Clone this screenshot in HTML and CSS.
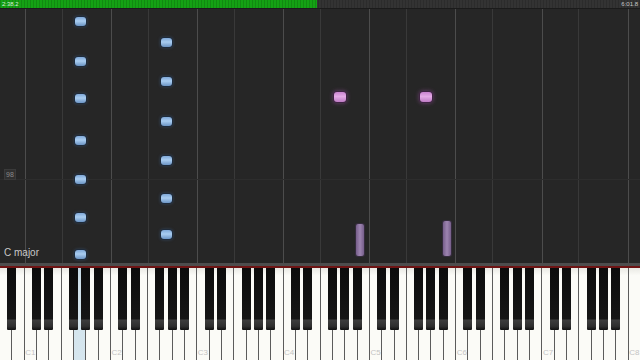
FILE: index.html
```html
<!DOCTYPE html>
<html lang="en">
  <head>
    <meta charset="utf-8">
    <title>Piano roll</title>
    <link rel="stylesheet" href="styles.css">
  </head>
  <body>
    <div class="app">
      <div class="timebar">
        <span class="time">2:38.2</span>
        <span class="time">6:01.8</span>
      </div>

      <div class="roll">
        <div class="lanes">
          <div class="lane"></div>
          <div class="lane c"></div><div class="lane f"></div>
          <div class="lane c"></div><div class="lane f"></div>
          <div class="lane c"></div><div class="lane f"></div>
          <div class="lane c"></div><div class="lane f"></div>
          <div class="lane c"></div><div class="lane f"></div>
          <div class="lane c"></div><div class="lane f"></div>
          <div class="lane c"></div><div class="lane f"></div>
          <div class="lane c"></div>
        </div>
        <div class="measure"></div>
        <span class="bar-no">98</span>
        <span class="key-sig">C major</span>

        <!-- G1 -->
        <div class="note blue" style="left:74.5px; top:7.5px"></div>
        <div class="note blue" style="left:74.5px; top:47.5px"></div>
        <div class="note blue" style="left:74.5px; top:84.5px"></div>
        <div class="note blue" style="left:74.5px; top:126.5px"></div>
        <div class="note blue" style="left:74.5px; top:165.5px"></div>
        <div class="note blue" style="left:74.5px; top:203.5px"></div>
        <div class="note blue" style="left:74.5px; top:240.5px"></div>
        <!-- G2 -->
        <div class="note blue" style="left:160.7px; top:28.5px"></div>
        <div class="note blue" style="left:160.7px; top:67.5px"></div>
        <div class="note blue" style="left:160.7px; top:107.5px"></div>
        <div class="note blue" style="left:160.7px; top:146.5px"></div>
        <div class="note blue" style="left:160.7px; top:184.5px"></div>
        <div class="note blue" style="left:160.7px; top:220.5px"></div>
        <!-- G4 / G5 -->
        <div class="note pink" style="left:333.5px; top:83px"></div>
        <div class="note pink" style="left:420px; top:83px"></div>
        <!-- A#4 / A#5 -->
        <div class="note purple" style="left:356px; top:215px; height:32px"></div>
        <div class="note purple" style="left:443px; top:212px; height:35px"></div>
      </div>

      <div class="keybed"></div>

      <div class="keyboard">
        <div class="key"><span class="blk"></span></div>
        <div class="key"></div>

        <div class="key"><span class="blk"></span><span class="lbl">C1</span></div>
        <div class="key"><span class="blk"></span></div>
        <div class="key"></div>
        <div class="key"><span class="blk"></span></div>
        <div class="key pressed"><span class="blk"></span></div>
        <div class="key"><span class="blk"></span></div>
        <div class="key"></div>

        <div class="key"><span class="blk"></span><span class="lbl">C2</span></div>
        <div class="key"><span class="blk"></span></div>
        <div class="key"></div>
        <div class="key"><span class="blk"></span></div>
        <div class="key"><span class="blk"></span></div>
        <div class="key"><span class="blk"></span></div>
        <div class="key"></div>

        <div class="key"><span class="blk"></span><span class="lbl">C3</span></div>
        <div class="key"><span class="blk"></span></div>
        <div class="key"></div>
        <div class="key"><span class="blk"></span></div>
        <div class="key"><span class="blk"></span></div>
        <div class="key"><span class="blk"></span></div>
        <div class="key"></div>

        <div class="key"><span class="blk"></span><span class="lbl">C4</span></div>
        <div class="key"><span class="blk"></span></div>
        <div class="key"></div>
        <div class="key"><span class="blk"></span></div>
        <div class="key"><span class="blk"></span></div>
        <div class="key"><span class="blk"></span></div>
        <div class="key"></div>

        <div class="key"><span class="blk"></span><span class="lbl">C5</span></div>
        <div class="key"><span class="blk"></span></div>
        <div class="key"></div>
        <div class="key"><span class="blk"></span></div>
        <div class="key"><span class="blk"></span></div>
        <div class="key"><span class="blk"></span></div>
        <div class="key"></div>

        <div class="key"><span class="blk"></span><span class="lbl">C6</span></div>
        <div class="key"><span class="blk"></span></div>
        <div class="key"></div>
        <div class="key"><span class="blk"></span></div>
        <div class="key"><span class="blk"></span></div>
        <div class="key"><span class="blk"></span></div>
        <div class="key"></div>

        <div class="key"><span class="blk"></span><span class="lbl">C7</span></div>
        <div class="key"><span class="blk"></span></div>
        <div class="key"></div>
        <div class="key"><span class="blk"></span></div>
        <div class="key"><span class="blk"></span></div>
        <div class="key"><span class="blk"></span></div>
        <div class="key"></div>

        <div class="key"><span class="lbl">C8</span></div>
      </div>
    </div>
  </body>
</html>
```

FILE: styles.css
```css
html, body { margin: 0; padding: 0; background: #262626; }
body { font-family: "Liberation Sans", Arial, sans-serif; }

.app { width: 640px; height: 360px; display: flex; flex-direction: column; overflow: hidden; }

/* playback position */
.timebar {
  height: 8px; flex: none;
  display: flex; justify-content: space-between; align-items: center;
  padding: 0 2px;
  background:
    repeating-linear-gradient(90deg, rgba(0,0,0,.14) 0 1px, transparent 1px 3px),
    linear-gradient(90deg, #14a114 317px, #333 317px);
  border-bottom: 1px solid #1b1b1b;
}
.time { font-size: 6px; line-height: 6px; color: #d8efd8; }
.time:last-child { color: #c8c8c8; }

/* falling notes */
.roll { flex: 1; position: relative; background: #262626; }
.lanes {
  height: 100%;
  display: grid;
  grid-template-columns: 2fr repeat(7, 3fr 4fr) 1fr;
}
.lane.c { background: linear-gradient(#4c4c4c, #4c4c4c) left top / 1px 100% no-repeat; }
.lane.f { background: linear-gradient(#393939, #393939) left top / 1px 100% no-repeat; }

.measure { position: absolute; left: 0; right: 0; top: 170px; height: 1px; background: #2d2d2d; }
.bar-no {
  position: absolute; left: 4px; top: 160px;
  font-size: 7px; line-height: 9px; padding: 0 1px;
  color: #8a8a8a; background: #303030; border: 1px solid #3a3a3a;
}
.key-sig { position: absolute; left: 4px; bottom: 5px; font-size: 10px; color: #c9c9c9; }

.note { position: absolute; width: 11.5px; height: 9px; border-radius: 3px; }
.note.blue {
  background: linear-gradient(#7fa8d8, #a9cdf1 45%, #6b94c4);
  box-shadow: 0 0 0 1px #1e2b3b, 0 0 3px 1px rgba(80, 130, 190, .35);
}
.note.pink {
  height: 10px; width: 12px;
  background: linear-gradient(#c983cf, #e4aae6 45%, #bd7bc3);
  box-shadow: 0 0 0 1px #3e2342, 0 0 4px 1px rgba(190, 100, 200, .45);
}
.note.purple {
  width: 8px; border-radius: 2px;
  background: linear-gradient(90deg, #765e8a, #9d84b0 50%, #765e8a);
  box-shadow: 0 0 0 1px #352c3d;
}

/* keyboard */
.keybed { height: 3px; flex: none; background: #4d4d4d; }
.keyboard {
  height: 94px; flex: none;
  display: flex;
  border-top: 2px solid #6e1414;
  box-sizing: border-box;
}
.key {
  flex: 1 1 0; position: relative;
  box-sizing: border-box;
  border-right: 1px solid #5c5c5c;
  background: linear-gradient(#e9e9e4, #fbfbf7 8%, #fbfbf7);
  display: flex; align-items: flex-end; justify-content: center;
  padding-bottom: 3px;
}
.key:last-child { border-right: none; }
.key.pressed { background: linear-gradient(#c3d7e3, #d2e3ec 20%, #d6e6ee); }
.lbl { font-size: 8px; color: #c4c4c4; }
.blk {
  position: absolute; top: 0; right: -5px; z-index: 1;
  width: 9px; height: 62px;
  border-radius: 0 0 1px 1px;
  background: linear-gradient(#0c0c0c, #151515 82%, #3d3d3d 84%, #2e2e2e 94%, #111);
}
```
